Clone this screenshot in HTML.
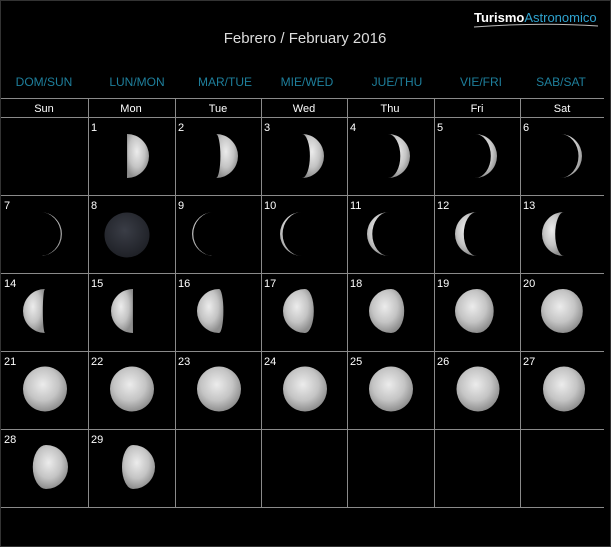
<!DOCTYPE html>
<html><head><meta charset="utf-8"><style>
html,body{margin:0;padding:0;background:#000;width:611px;height:547px;overflow:hidden}
svg{display:block}
text{font-family:"Liberation Sans",sans-serif}
</style></head><body>
<svg width="611" height="547" viewBox="0 0 611 547" xmlns="http://www.w3.org/2000/svg">
<defs>
<radialGradient id="m" cx="45%" cy="40%" r="60%">
<stop offset="0" stop-color="#ececec"/><stop offset="0.6" stop-color="#c4c4c4"/><stop offset="1" stop-color="#8e8e8e"/>
</radialGradient>
<radialGradient id="d" cx="45%" cy="40%" r="60%">
<stop offset="0" stop-color="#3a3d46"/><stop offset="1" stop-color="#1f2127"/>
</radialGradient>
</defs>
<rect width="611" height="547" fill="#000"/>
<rect x="0.5" y="0.5" width="610" height="546" fill="none" stroke="#333"/>
<!-- logo -->
<text x="474" y="22" font-size="13" font-weight="bold" fill="#fff">Turismo<tspan fill="#2fa3cf" font-weight="normal">Astronomico</tspan></text>
<path d="M474,27 Q540,22 598,26" stroke="#bbb" stroke-width="1" fill="none"/>
<text x="305" y="43" font-size="15" fill="#dddddd" text-anchor="middle">Febrero / February 2016</text>
<g font-size="12" fill="#1e7f9c" text-anchor="middle">
<text x="44" y="86">DOM/SUN</text><text x="137" y="86">LUN/MON</text><text x="225" y="86">MAR/TUE</text>
<text x="307" y="86">MIE/WED</text><text x="397" y="86">JUE/THU</text><text x="481" y="86">VIE/FRI</text><text x="561" y="86">SAB/SAT</text>
</g>
<g font-size="11" fill="#fff" text-anchor="middle">
<text x="44" y="112">Sun</text><text x="131" y="112">Mon</text><text x="218" y="112">Tue</text>
<text x="304" y="112">Wed</text><text x="390" y="112">Thu</text><text x="477" y="112">Fri</text><text x="562" y="112">Sat</text>
</g>
<g stroke="#8a8a8a" stroke-width="1">
<line x1="1" y1="98.5" x2="604" y2="98.5"/><line x1="1" y1="117.5" x2="604" y2="117.5"/>
<line x1="1" y1="195.5" x2="604" y2="195.5"/><line x1="1" y1="273.5" x2="604" y2="273.5"/>
<line x1="1" y1="351.5" x2="604" y2="351.5"/><line x1="1" y1="429.5" x2="604" y2="429.5"/>
<line x1="1" y1="507.5" x2="604" y2="507.5"/>
<line x1="88.5" y1="98" x2="88.5" y2="508"/><line x1="175.5" y1="98" x2="175.5" y2="508"/>
<line x1="261.5" y1="98" x2="261.5" y2="508"/><line x1="347.5" y1="98" x2="347.5" y2="508"/>
<line x1="434.5" y1="98" x2="434.5" y2="508"/><line x1="520.5" y1="98" x2="520.5" y2="508"/>
</g>
<g font-size="11" fill="#fff">
<text x="91" y="131">1</text><text x="178" y="131">2</text><text x="264" y="131">3</text><text x="350" y="131">4</text><text x="437" y="131">5</text><text x="523" y="131">6</text>
<text x="4" y="209">7</text><text x="91" y="209">8</text><text x="178" y="209">9</text><text x="264" y="209">10</text><text x="350" y="209">11</text><text x="437" y="209">12</text><text x="523" y="209">13</text>
<text x="4" y="287">14</text><text x="91" y="287">15</text><text x="178" y="287">16</text><text x="264" y="287">17</text><text x="350" y="287">18</text><text x="437" y="287">19</text><text x="523" y="287">20</text>
<text x="4" y="365">21</text><text x="91" y="365">22</text><text x="178" y="365">23</text><text x="264" y="365">24</text><text x="350" y="365">25</text><text x="437" y="365">26</text><text x="523" y="365">27</text>
<text x="4" y="443">28</text><text x="91" y="443">29</text>
</g>
<g fill="url(#m)">
<!-- row 1: lit right, waning to crescent -->
<path transform="translate(127,156)" d="M0,-22 A22 22 0 0 1 0,22 A0.1 22 0 0 0 0,-22Z"/>
<path transform="translate(216,156)" d="M0,-22 A22 22 0 0 1 0,22 A4.4 22 0 0 0 0,-22Z"/>
<path transform="translate(302,156)" d="M0,-22 A22 22 0 0 1 0,22 A7.9 22 0 0 0 0,-22Z"/>
<path transform="translate(388,156)" d="M0,-22 A22 22 0 0 1 0,22 A12.3 22 0 0 0 0,-22Z"/>
<path transform="translate(475,156)" d="M0,-22 A22 22 0 0 1 0,22 A15.8 22 0 0 0 0,-22Z"/>
<path transform="translate(560,156)" d="M0,-22 A22 22 0 0 1 0,22 A18.5 22 0 0 0 0,-22Z"/>
<!-- row 2 -->
<path transform="translate(40,234)" d="M0,-22 A22 22 0 0 1 0,22 A20.7 22 0 0 0 0,-22Z"/>
<path transform="translate(214,234)" d="M0,-22 A22 22 0 0 0 0,22 A20.7 22 0 0 1 0,-22Z"/>
<path transform="translate(302,234)" d="M0,-22 A22 22 0 0 0 0,22 A19.4 22 0 0 1 0,-22Z"/>
<path transform="translate(389,234)" d="M0,-22 A22 22 0 0 0 0,22 A16.7 22 0 0 1 0,-22Z"/>
<path transform="translate(477,234)" d="M0,-22 A22 22 0 0 0 0,22 A13.2 22 0 0 1 0,-22Z"/>
<path transform="translate(564,234)" d="M0,-22 A22 22 0 0 0 0,22 A8.8 22 0 0 1 0,-22Z"/>
<!-- row 3 -->
<path transform="translate(45,311)" d="M0,-22 A22 22 0 0 0 0,22 A2.2 22 0 0 1 0,-22Z"/>
<path transform="translate(133,311)" d="M0,-22 A22 22 0 0 0 0,22 A0.1 22 0 0 1 0,-22Z"/>
<path transform="translate(219,311)" d="M0,-22 A22 22 0 0 0 0,22 A4.4 22 0 0 0 0,-22Z"/>
<path transform="translate(305,311)" d="M0,-22 A22 22 0 0 0 0,22 A8.8 22 0 0 0 0,-22Z"/>
<path transform="translate(391,311)" d="M0,-22 A22 22 0 0 0 0,22 A13.2 22 0 0 0 0,-22Z"/>
<path transform="translate(477,311)" d="M0,-22 A22 22 0 0 0 0,22 A16.7 22 0 0 0 0,-22Z"/>
<path transform="translate(563,311)" d="M0,-22 A22 22 0 0 0 0,22 A19.8 22 0 0 0 0,-22Z"/>
<!-- row 4 full -->
<ellipse cx="45" cy="389" rx="22" ry="22.5"/>
<ellipse cx="132" cy="389" rx="22" ry="22.5"/>
<ellipse cx="219" cy="389" rx="22" ry="22.5"/>
<ellipse cx="305" cy="389" rx="22" ry="22.5"/>
<ellipse cx="391" cy="389" rx="22" ry="22.5"/>
<ellipse cx="478" cy="389" rx="21.5" ry="22.5"/>
<ellipse cx="564" cy="389" rx="21" ry="22.5"/>
<!-- row 5 -->
<path transform="translate(46,467)" d="M0,-22 A22 22 0 0 1 0,22 A13.2 22 0 0 1 0,-22Z"/>
<path transform="translate(133,467)" d="M0,-22 A22 22 0 0 1 0,22 A11 22 0 0 1 0,-22Z"/>
</g>
<circle cx="127" cy="235" r="22.5" fill="url(#d)"/>
</svg>
</body></html>
